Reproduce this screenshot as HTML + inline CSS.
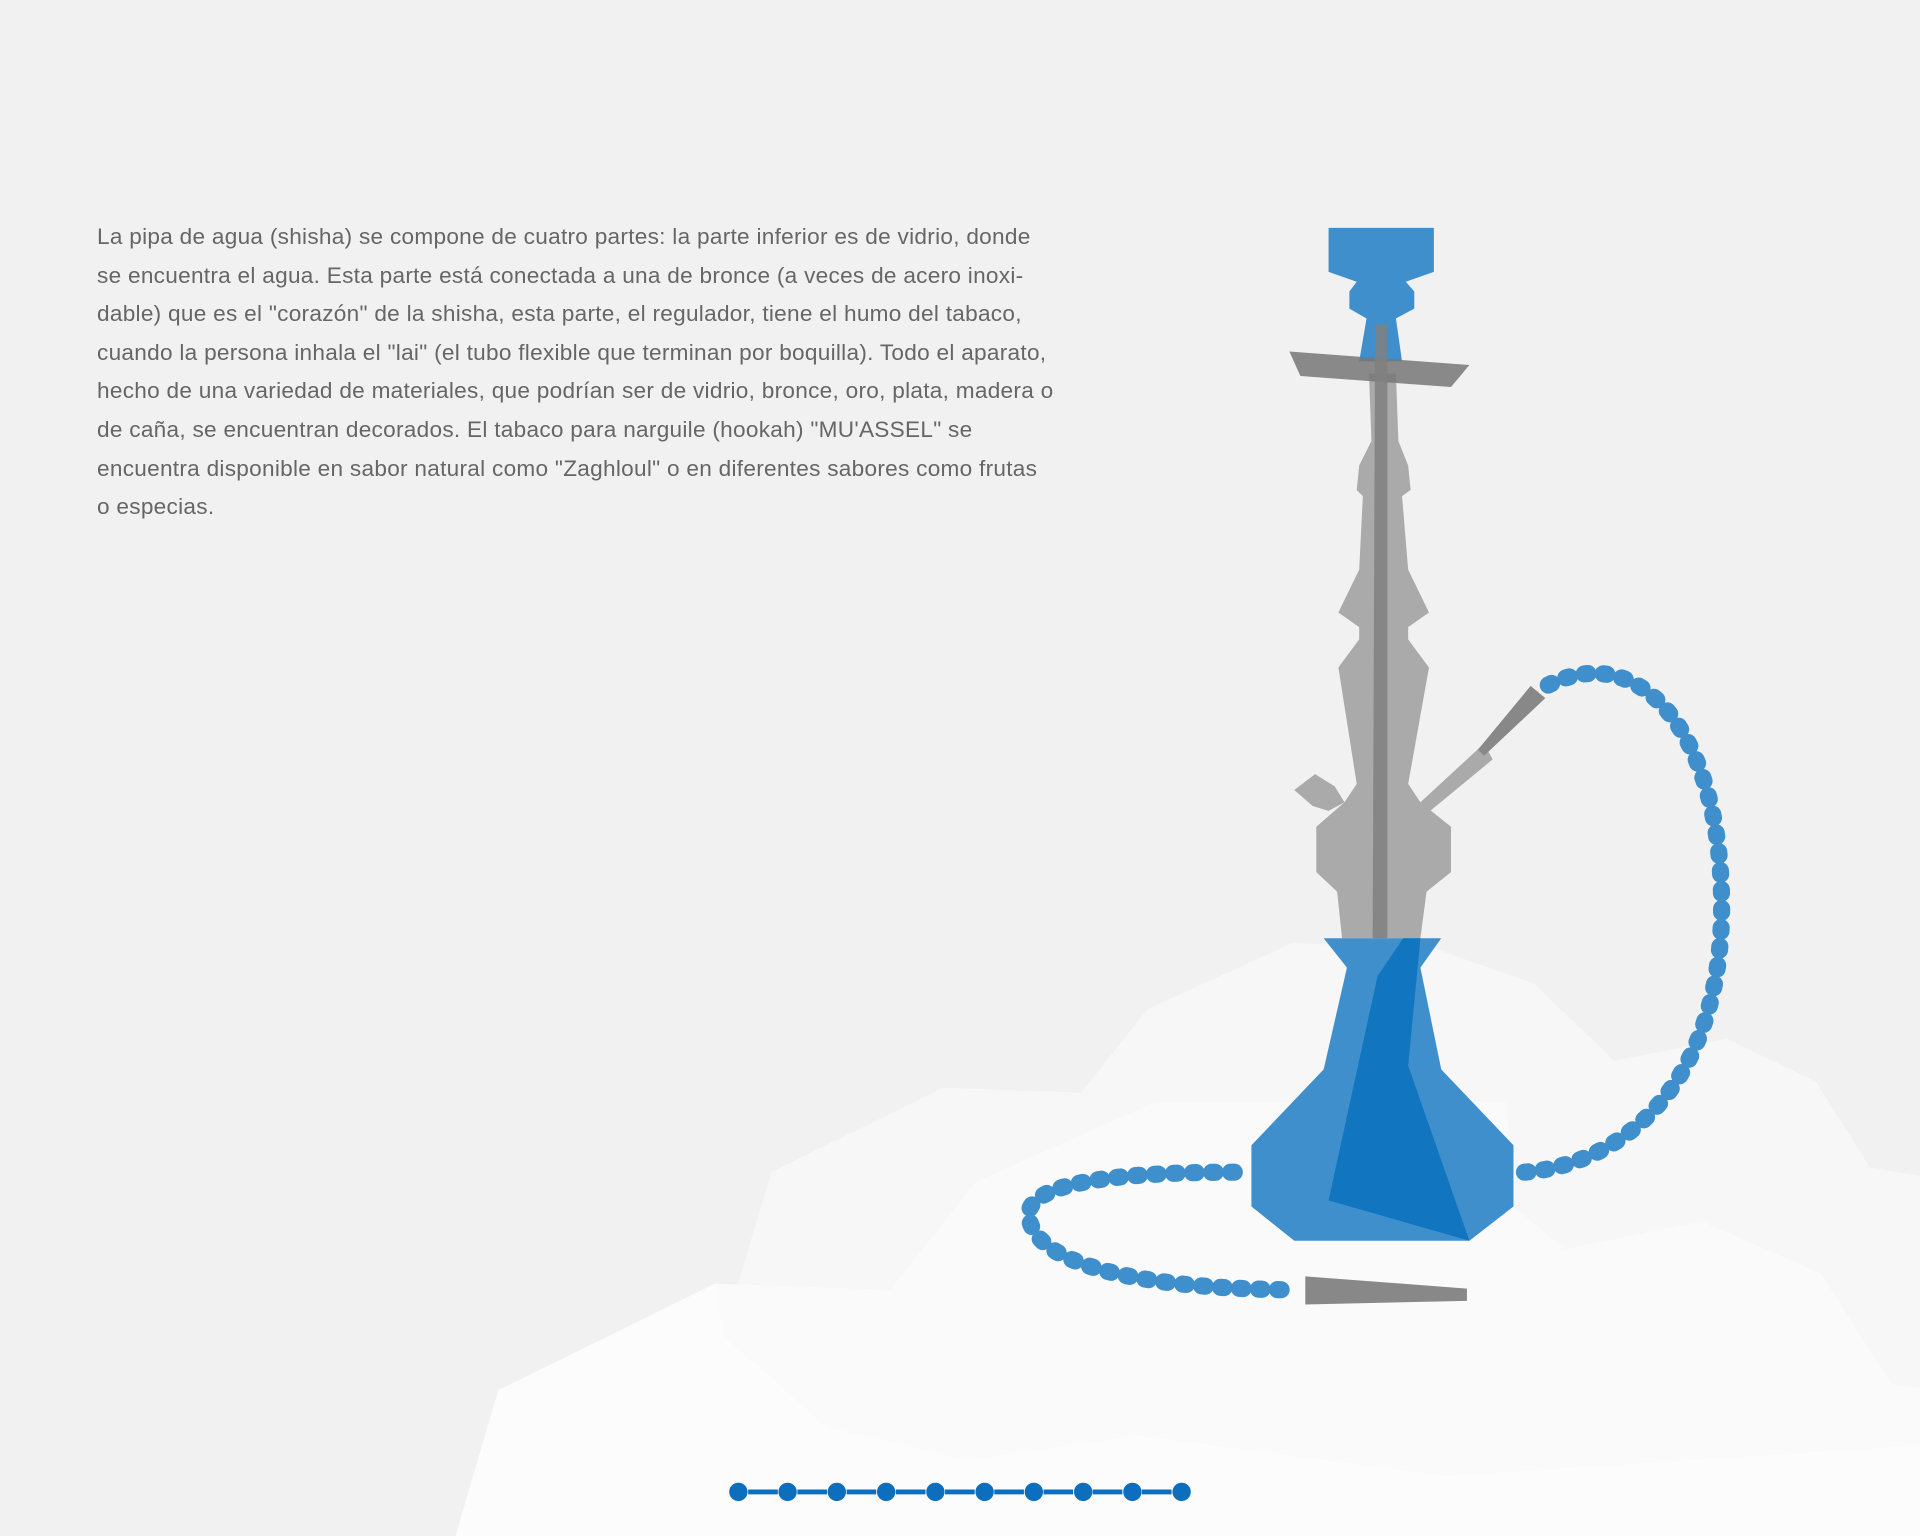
<!DOCTYPE html>
<html><head><meta charset="utf-8"><style>
html,body{margin:0;padding:0;background:#f1f1f1;width:1920px;height:1536px;overflow:hidden;position:relative}
svg{position:absolute;left:0;top:0}
.t{position:absolute;left:97px;top:218px;width:1060px;font-family:"Liberation Sans",Arial,sans-serif;font-size:22.6px;letter-spacing:0.28px;line-height:38.6px;color:#666;white-space:nowrap}
</style></head><body>
<svg width="1920" height="1536" viewBox="0 0 1568 1254" preserveAspectRatio="none">
<polygon fill="#f7f7f7" points="590,1090 630,957 770,888 883,892 937,824 1055,770 1170,774 1253,803 1318,866 1410,848 1483,883 1527,953 1568,960 1568,1254 590,1254"/>
<polygon fill="#fafafa" points="372,1254 407,1135 584,1048 727,1053 797,965 943,900 1230,900 1236,985 1278,1020 1390,997 1487,1040 1545,1130 1568,1133 1568,1254"/>
<polygon fill="#fcfcfc" points="590,1090 675,1165 790,1192 930,1172 1180,1205 1568,1180 1568,1254 372,1254 407,1135 584,1048"/>
<polygon fill="#aaaaaa" points="1118,305 1140,305 1142,360 1150,380 1152,400 1145,405 1150,465 1167,500 1150,512 1150,522 1167,545 1150,640 1160,655 1185,675 1185,712 1165,728 1160,766 1096,766 1092,728 1075,712 1075,675 1098,655 1108,640 1093,545 1110,522 1110,512 1093,500 1110,465 1113,405 1108,400 1110,380 1120,360"/>
<polygon fill="#aaaaaa" points="1057,645 1074,632 1090,642 1098,655 1085,662 1072,658"/>
<polygon fill="#aaaaaa" points="1160,655 1212,607 1219,620 1168,662"/>
<polygon fill="#888" points="1207,612 1250,560 1262,570 1212,617"/>
<polygon fill="#3f8fcc" points="1085,186 1171,186 1171,222 1148,230 1155,238 1155,252 1140,260 1145,295 1110,295 1116,260 1102,252 1102,238 1108,230 1085,222"/>
<polygon fill="#777" opacity=".85" points="1053,287 1200,298 1185,316 1062,307"/>
<polygon fill="#808080" opacity=".85" points="1123,265 1133,265 1133,766 1121,766"/>
<polygon fill="#3f8fcc" points="1081,766 1177,766 1160,790 1177,873 1236,935 1236,985 1200,1013 1057,1013 1022,985 1022,935 1081,873 1100,790"/>
<polygon fill="#1175bf" points="1146,766 1160,766 1150,870 1200,1013 1085,980 1125,797"/>
<polygon fill="#888" points="1066,1042 1198,1052 1198,1062 1066,1065"/>
<g fill="none" stroke="#3f8fcc" stroke-width="14" stroke-linecap="round" stroke-dasharray="3 12.5">
<path d="M1245,957 C1330,950 1406,880 1406,740 C1406,600 1340,520 1263,560"/>
<path d="M1008,957 C900,957 840,968 840,992 C845,1040 960,1052 1053,1053"/>
</g>
<line x1="611" y1="1218" x2="965" y2="1218" stroke="#0d6ebe" stroke-width="4" stroke-dasharray="24.2 16"/>
<g fill="#0d6ebe">
<circle cx="603" cy="1218" r="7.5"/><circle cx="643.2" cy="1218" r="7.5"/><circle cx="683.4" cy="1218" r="7.5"/><circle cx="723.7" cy="1218" r="7.5"/><circle cx="763.9" cy="1218" r="7.5"/><circle cx="804.1" cy="1218" r="7.5"/><circle cx="844.3" cy="1218" r="7.5"/><circle cx="884.6" cy="1218" r="7.5"/><circle cx="924.8" cy="1218" r="7.5"/><circle cx="965" cy="1218" r="7.5"/>
</g>
</svg>
<div class="t">La pipa de agua (shisha) se compone de cuatro partes: la parte inferior es de vidrio, donde<br>se encuentra el agua. Esta parte está conectada a una de bronce (a veces de acero inoxi-<br>dable) que es el "corazón" de la shisha, esta parte, el regulador, tiene el humo del tabaco,<br>cuando la persona inhala el "lai" (el tubo flexible que terminan por boquilla). Todo el aparato,<br>hecho de una variedad de materiales, que podrían ser de vidrio, bronce, oro, plata, madera o<br>de caña, se encuentran decorados. El tabaco para narguile (hookah) "MU'ASSEL" se<br>encuentra disponible en sabor natural como "Zaghloul" o en diferentes sabores como frutas<br>o especias.</div>
</body></html>
